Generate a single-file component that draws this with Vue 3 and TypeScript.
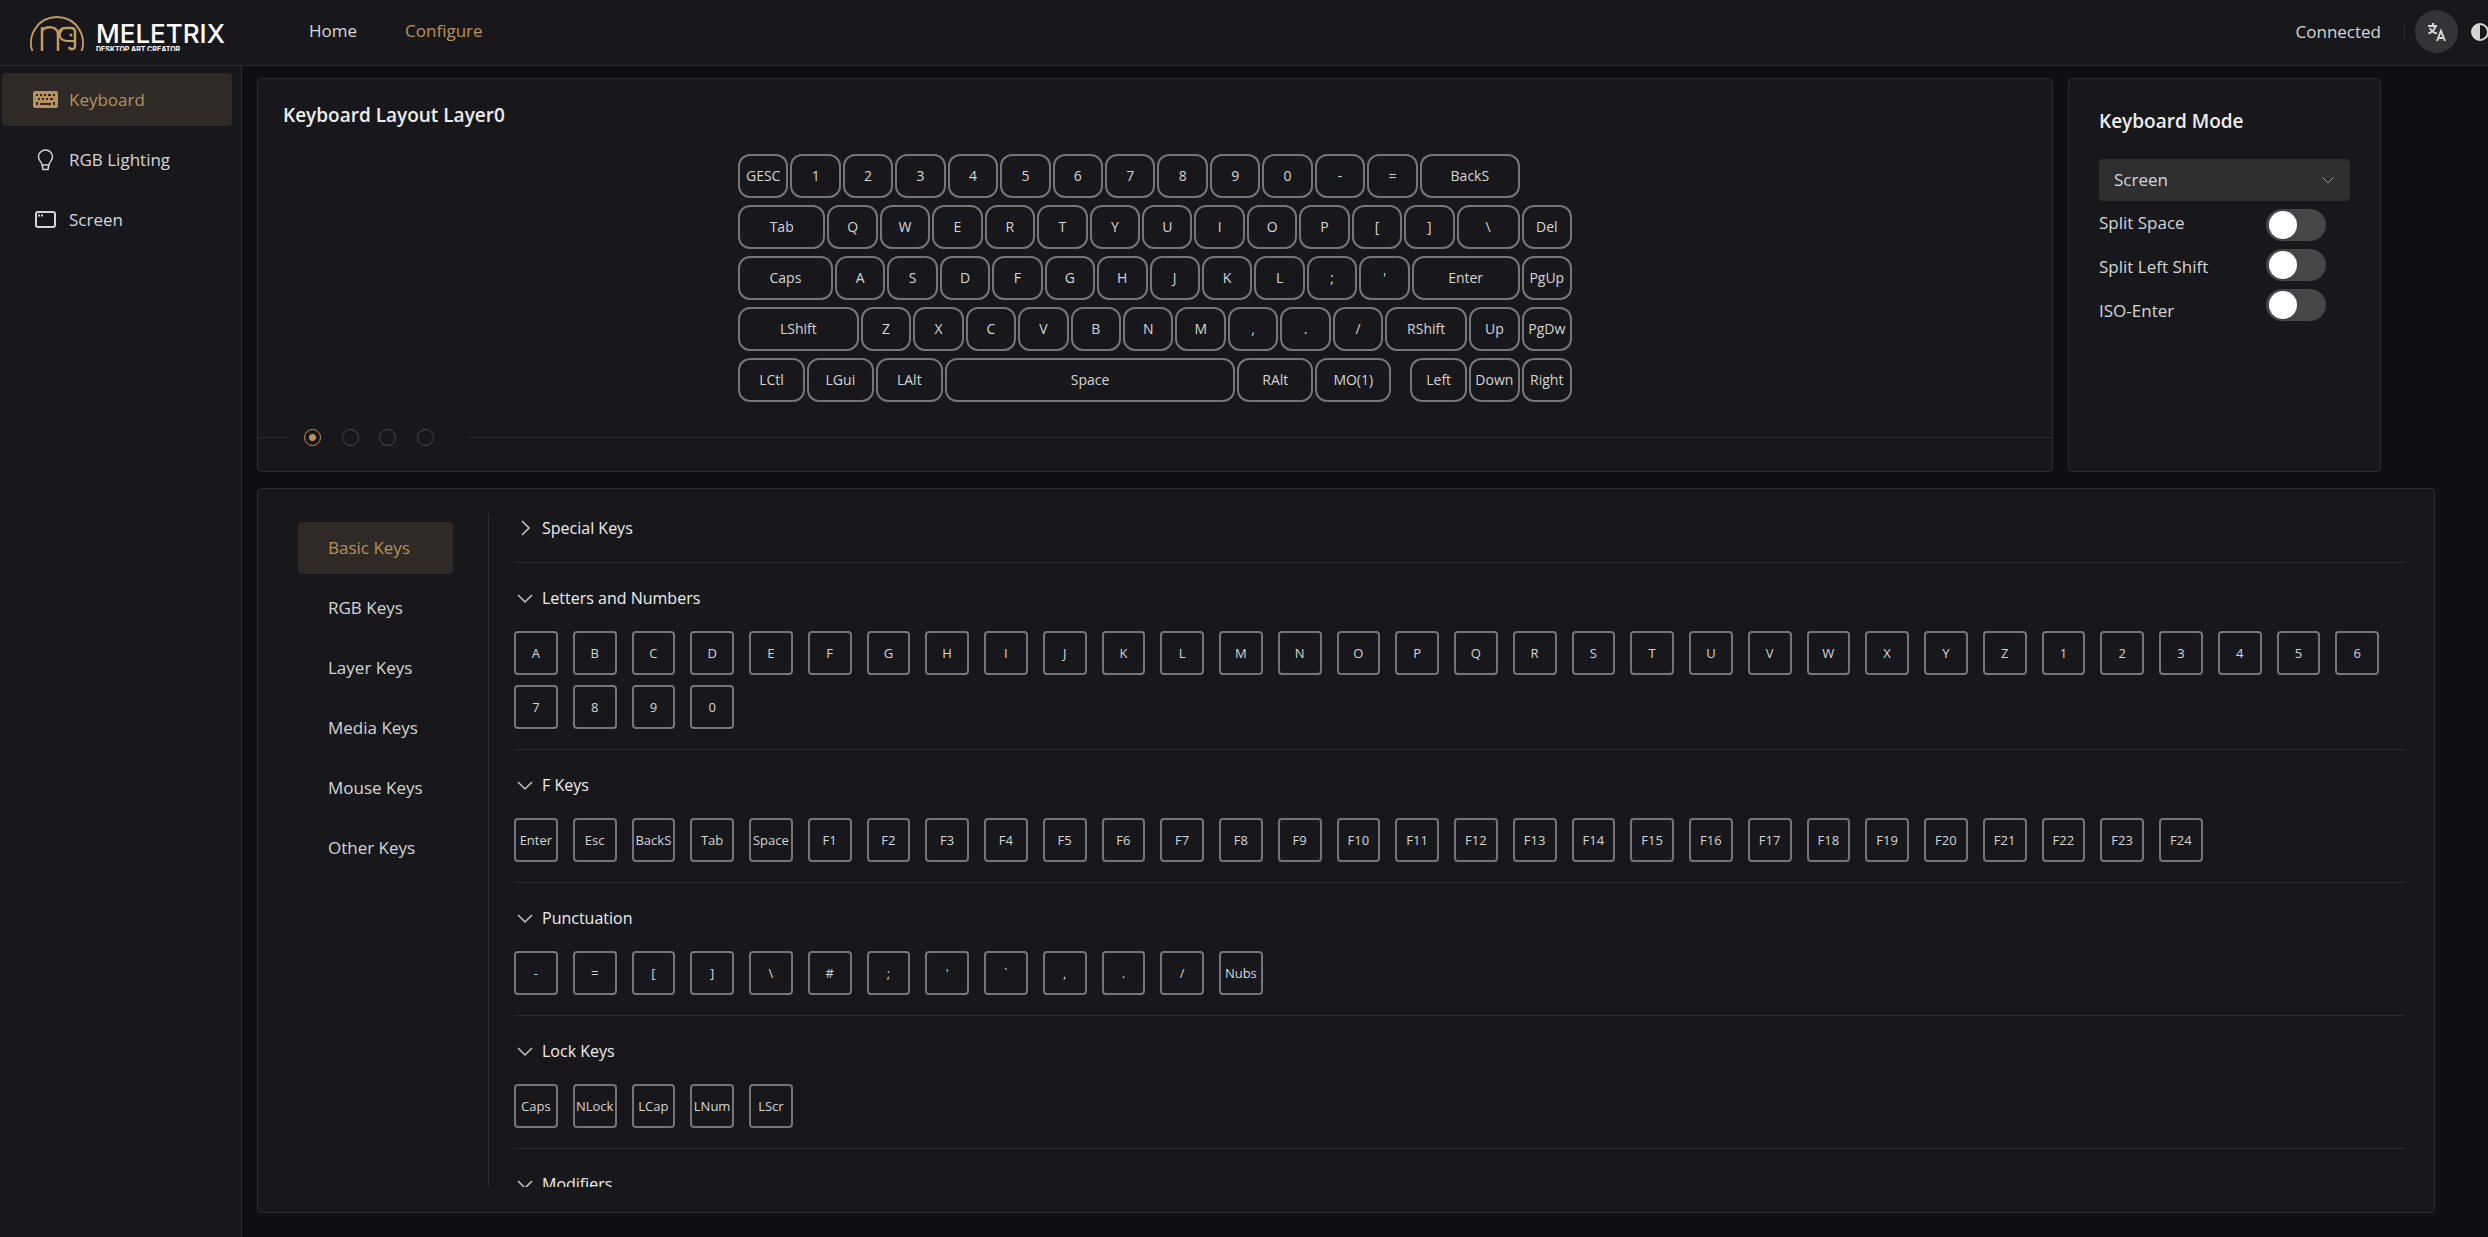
<script setup lang="ts">
import { ref } from 'vue'

interface Cap {
  label: string
  span: number
}
interface Section {
  title: string
  open: boolean
  keys: string[]
}

const UNIT = 105
const caps = (labels: string): Cap[] => labels.split(' ').map((label) => ({ label, span: UNIT }))
const cap = (label: string, span = UNIT): Cap => ({ label, span })

// An empty label marks a gap in the row.
const rows: Cap[][] = [
  [...caps('GESC 1 2 3 4 5 6 7 8 9 0 - ='), cap('BackS', 205), cap('', 104)],
  [cap('Tab', 179), ...caps('Q W E R T Y U I O P [ ]'), cap('\\', 130), cap('Del')],
  [cap('Caps', 194), ...caps("A S D F G H J K L ; '"), cap('Enter', 220), cap('PgUp')],
  [cap('LShift', 246), ...caps('Z X C V B N M , . /'), cap('RShift', 168), cap('Up'), cap('PgDw')],
  [
    cap('LCtl', 138), cap('LGui', 138), cap('LAlt', 138), cap('Space', 586),
    cap('RAlt', 156), cap('MO(1)', 156), cap('', 34), cap('Left', 118), cap('Down'), cap('Right'),
  ],
]
const tracks = (row: Cap[]) => row.map((c) => `minmax(0, ${c.span}fr)`).join(' ')

const layer = ref(0)
const mode = ref('Screen')
const options = ref([
  { id: 'split-space', label: 'Split Space', on: false },
  { id: 'split-shift', label: 'Split Left Shift', on: false },
  { id: 'iso-enter', label: 'ISO-Enter', on: false },
])

const categories = ['Basic Keys', 'RGB Keys', 'Layer Keys', 'Media Keys', 'Mouse Keys', 'Other Keys']
const category = ref('Basic Keys')

const fKeys = Array.from({ length: 24 }, (_, i) => `F${i + 1}`)
const sections = ref<Section[]>([
  { title: 'Special Keys', open: false, keys: [] },
  { title: 'Letters and Numbers', open: true, keys: [...'ABCDEFGHIJKLMNOPQRSTUVWXYZ1234567890'] },
  { title: 'F Keys', open: true, keys: ['Enter', 'Esc', 'BackS', 'Tab', 'Space', ...fKeys] },
  { title: 'Punctuation', open: true, keys: [...'-=[]\\#;\'`,./', 'Nubs'] },
  { title: 'Lock Keys', open: true, keys: ['Caps', 'NLock', 'LCap', 'LNum', 'LScr'] },
  { title: 'Modifiers', open: true, keys: [] },
])
</script>

<template>
  <div class="app">
    <header class="topbar">
      <a class="logo" href="#" aria-label="Meletrix">
        <svg class="mark" width="56" height="41" viewBox="0 0 56 41" fill="none">
          <path d="M4.500 44 A26 26 0 1 1 51.500 44" stroke-width="2" />
          <path d="M13 42V17M13 21c3-5 16-6 16 4v17" stroke-width="2.500" />
          <path d="M29 26c0-5 3-8 8-8h5q4 0 4 4v14c0 4-5 4-6 1" stroke-width="2.500" />
          <path d="M33 20c-5 6-1 11 6 11h7" stroke-width="2" />
          <circle cx="42" cy="25" r="1.500" />
        </svg>
        <span class="wordmark">
          <span class="brand">MELETRIX</span>
          <span class="tagline">DESKTOP ART CREATOR</span>
        </span>
      </a>
      <nav class="nav">
        <a href="#">Home</a>
        <a href="#" class="active">Configure</a>
      </nav>
      <div class="tools">
        <span class="status">Connected</span>
        <span class="rule"></span>
        <button class="tool filled" aria-label="Language">
          <svg width="20" height="20" viewBox="0 0 20 20" fill="none" stroke="currentColor" stroke-width="2">
            <path d="M1 4h9M6 1v3M8.500 4c-1 4-3 6-7 7.500M3 6c1 3 3 4.500 7 5.500" />
            <path d="M10 19l4-10 4 10M11 16h6" />
          </svg>
        </button>
        <button class="tool" aria-label="Theme">
          <svg width="20" height="20" viewBox="0 0 20 20">
            <circle cx="10" cy="10" r="8" fill="none" stroke="currentColor" stroke-width="2" />
            <path d="M10 2a8 8 0 0 0 0 16z" fill="currentColor" />
          </svg>
        </button>
      </div>
    </header>

    <div class="body">
      <aside class="sidebar">
        <a href="#" class="side-item active">
          <svg width="25" height="18" viewBox="0 0 25 18">
            <path fill="currentColor" fill-rule="evenodd" d="M2 0h21a2 2 0 0 1 2 2v13a2 2 0 0 1-2 2H2a2 2 0 0 1-2-2V2a2 2 0 0 1 2-2zM3 3v2h2V3zM7 3v2h2V3zM11 3v2h2V3zM15 3v2h3V3zM20 3v2h2V3zM5 7v2h2V7zM9 7v2h2V7zM13 7v2h2V7zM17 7v2h3V7zM3 11v3h2v-3zM7 12v2h11v-2zM20 11v3h2v-3z" />
          </svg>
          Keyboard
        </a>
        <a href="#" class="side-item">
          <svg width="25" height="22" viewBox="0 0 25 22" fill="none" stroke="currentColor" stroke-width="1.500">
            <path d="M9 16c0-3-3.500-4-3.500-8a7 7 0 0 1 14 0c0 4-3.500 5-3.500 8zM9.300 16.500l.7 4h5l.7-4" />
          </svg>
          RGB Lighting
        </a>
        <a href="#" class="side-item">
          <svg width="25" height="18" viewBox="0 0 25 18" fill="none" stroke="currentColor" stroke-width="2">
            <rect x="3" y="1" width="19" height="15" rx="2" />
            <path d="M5 4.500h2M8 4.500h2" />
          </svg>
          Screen
        </a>
      </aside>

      <main class="main">
        <div class="upper">
          <section class="card layout-card">
            <h2>Keyboard Layout Layer{{ layer }}</h2>
            <div class="keyboard">
              <div v-for="(row, r) in rows" :key="r" class="kb-row" :style="{ gridTemplateColumns: tracks(row) }">
                <template v-for="(c, i) in row" :key="i">
                  <button v-if="c.label" class="cap">{{ c.label }}</button>
                  <i v-else></i>
                </template>
              </div>
            </div>
            <div class="layers">
              <span class="line short"></span>
              <div class="radios">
                <input v-for="n in 4" :key="n" v-model="layer" type="radio" name="layer" :value="n - 1" :aria-label="`Layer ${n - 1}`" />
              </div>
              <span class="line"></span>
            </div>
          </section>

          <section class="card mode-card">
            <h2>Keyboard Mode</h2>
            <div class="select">
              <select v-model="mode" aria-label="Keyboard Mode">
                <option>Screen</option>
                <option>Keyboard</option>
              </select>
              <svg width="14" height="8" viewBox="0 0 14 8" fill="none" stroke="currentColor"><path d="M1 1l6 6 6-6" /></svg>
            </div>
            <div class="switches">
              <div class="labels">
                <label v-for="o in options" :key="o.id" :for="o.id">{{ o.label }}</label>
              </div>
              <div class="toggles">
                <input v-for="o in options" :id="o.id" :key="o.id" v-model="o.on" type="checkbox" role="switch" />
              </div>
            </div>
          </section>
        </div>

        <section class="card palette">
          <nav class="categories">
            <button v-for="c in categories" :key="c" :class="{ active: c === category }" @click="category = c">{{ c }}</button>
          </nav>
          <div class="sections">
            <div v-for="s in sections" :key="s.title" class="section">
              <button class="section-head" :aria-expanded="s.open" @click="s.open = !s.open">
                <svg width="22" height="22" viewBox="0 0 22 22" fill="none" stroke="currentColor" stroke-width="1.500">
                  <path :d="s.open ? 'M4 8l7 7 7-7' : 'M8 4l7 7-7 7'" />
                </svg>
                {{ s.title }}
              </button>
              <div v-if="s.open" class="keys">
                <button v-for="k in s.keys" :key="k" class="key">{{ k }}</button>
              </div>
            </div>
          </div>
        </section>
      </main>
    </div>
  </div>
</template>

<style>
body {
  background: #101014;
}
</style>

<style scoped>
* {
  box-sizing: border-box;
}
.app {
  --gold: #b8925a;
  --line: #2d2d30;
  --panel: #18181c;
  --text: #d5d5d6;
  display: flex;
  flex-direction: column;
  height: 100vh;
  overflow: hidden;
  background: #101014;
  color: var(--text);
  font-family: "Open Sans", "Noto Sans", sans-serif;
  font-size: 17px;
  line-height: 28px;
}
button {
  border: 0;
  padding: 0;
  background: none;
  color: inherit;
  font: inherit;
  cursor: pointer;
}
a {
  color: inherit;
  text-decoration: none;
}
svg {
  flex: none;
}

.topbar {
  display: flex;
  align-items: flex-start;
  flex: none;
  height: 66px;
  border-bottom: 1px solid var(--line);
  background: var(--panel);
  overflow: hidden;
}
.logo {
  display: flex;
  gap: 11px;
  height: 41px;
  width: 200px;
  margin: 10px 50px 0 29px;
  overflow: hidden;
}
.mark {
  stroke: #c39b5e;
}
.mark circle {
  fill: #c39b5e;
  stroke: none;
}
.wordmark {
  display: flex;
  flex-direction: column;
  padding-top: 12px;
  color: #fff;
  font-family: Inter, sans-serif;
  white-space: nowrap;
}
.brand {
  font-size: 26px;
  font-weight: 500;
  line-height: 24px;
}
.tagline {
  font-size: 7px;
  font-weight: 700;
  line-height: 8px;
}
.nav {
  display: flex;
  gap: 48px;
  margin: 17px auto 0 30px;
}
.active {
  color: var(--gold);
}
.tools {
  display: flex;
  align-items: center;
  margin: 10px -13px 0 0;
}
.rule {
  width: 1px;
  height: 20px;
  margin: 0 10px 0 23px;
  background: var(--line);
}
.tool {
  display: flex;
  align-items: center;
  justify-content: center;
  width: 43px;
  height: 43px;
  border-radius: 50%;
}
.filled {
  background: #343438;
}

.body {
  display: flex;
  flex: 1;
  min-height: 0;
}
.sidebar {
  display: flex;
  flex: none;
  flex-direction: column;
  gap: 7px;
  width: 242px;
  padding: 7px 9px 0 2px;
  border-right: 1px solid var(--line);
  background: var(--panel);
}
.side-item {
  display: flex;
  align-items: center;
  gap: 11px;
  height: 53px;
  padding-left: 31px;
  border-radius: 4px;
}
.side-item.active,
.categories .active {
  background: #2f2a26;
  color: var(--gold);
}

.main {
  display: flex;
  flex: 1;
  flex-direction: column;
  gap: 16px;
  min-width: 0;
  padding: 12px 53px 24px 15px;
}
.card {
  border: 1px solid var(--line);
  border-radius: 4px;
  background: var(--panel);
}
.upper {
  display: flex;
  gap: 15px;
  padding-right: 54px;
}
h2 {
  margin: 0;
  color: #ededed;
  font-size: 19px;
  font-weight: 600;
  line-height: 28px;
}
.layout-card {
  flex: 1;
  min-width: 0;
  height: 394px;
}
.layout-card h2 {
  padding: 22px 25px 0;
}
.keyboard {
  display: flex;
  flex-direction: column;
  gap: 7px;
  max-width: 836px;
  margin: 25px auto 27px;
}
.kb-row {
  display: grid;
}
.cap {
  height: 44px;
  margin: 0 1px;
  border: 2px solid #757577;
  border-radius: 12px;
  font-size: 14px;
  line-height: 20px;
  white-space: nowrap;
}
.layers {
  display: flex;
  align-items: center;
  gap: 15px;
}
.line {
  flex: 1;
  height: 1px;
  background: var(--line);
}
.short {
  flex: 0 0 31px;
}
.radios {
  display: grid;
  grid-template-columns: repeat(4, 1fr);
  width: 150px;
}
.radios input {
  appearance: none;
  width: 17px;
  height: 17px;
  margin: 0;
  border: 1px solid #4b4b4e;
  border-radius: 50%;
}
.radios input:checked {
  border-color: var(--gold);
  background: radial-gradient(circle, var(--gold) 3px, transparent 4px);
}

.mode-card {
  flex: none;
  width: 313px;
  padding: 28px 30px 0;
}
.select {
  position: relative;
  margin-top: 24px;
}
.select select {
  display: block;
  appearance: none;
  width: 100%;
  height: 42px;
  padding: 0 15px;
  border: 0;
  border-radius: 4px;
  background: #2f2f32;
  color: inherit;
  font: inherit;
}
.select svg {
  position: absolute;
  top: 17px;
  right: 15px;
  color: #88888a;
  pointer-events: none;
}
.switches {
  display: flex;
  justify-content: space-between;
  padding-right: 24px;
}
.labels {
  display: flex;
  flex-direction: column;
  line-height: 44px;
}
.toggles {
  display: flex;
  flex-direction: column;
  gap: 8px;
  padding-top: 8px;
}
.toggles input {
  appearance: none;
  width: 60px;
  height: 32px;
  margin: 0;
  padding: 2px 3px;
  border-radius: 16px;
  background: #464648;
}
.toggles input::before {
  content: "";
  display: block;
  width: 28px;
  height: 28px;
  border-radius: 50%;
  background: #fff;
}
.toggles input:checked {
  background: var(--gold);
}
.toggles input:checked::before {
  margin-left: auto;
}

.palette {
  display: flex;
  flex: 1;
  min-height: 0;
  padding: 25px 29px 25px 40px;
}
.categories {
  display: flex;
  flex: none;
  flex-direction: column;
  gap: 8px;
  width: 191px;
  padding: 8px 35px 0 0;
  border-right: 1px solid var(--line);
}
.categories button {
  height: 52px;
  padding-left: 30px;
  border-radius: 4px;
  text-align: left;
}
.sections {
  flex: 1;
  min-width: 0;
  padding-left: 25px;
  overflow: auto;
  scrollbar-width: none;
}
.section {
  padding: 21px 0 20px;
  border-top: 1px solid var(--line);
}
.section:first-child {
  padding-top: 0;
  border-top: 0;
}
.section-head {
  display: flex;
  align-items: center;
  gap: 6px;
  color: #ededed;
  font-size: 16px;
}
.section-head svg {
  color: #c5c5c6;
}
.keys {
  display: grid;
  grid-template-columns: repeat(auto-fill, minmax(43px, 1fr));
  gap: 10px 15px;
  margin-top: 19px;
  padding-right: 26px;
}
.key {
  display: flex;
  align-items: center;
  justify-content: center;
  height: 44px;
  border: 2px solid #757577;
  border-radius: 4px;
  font-size: 13px;
  line-height: 20px;
  white-space: nowrap;
}
</style>
